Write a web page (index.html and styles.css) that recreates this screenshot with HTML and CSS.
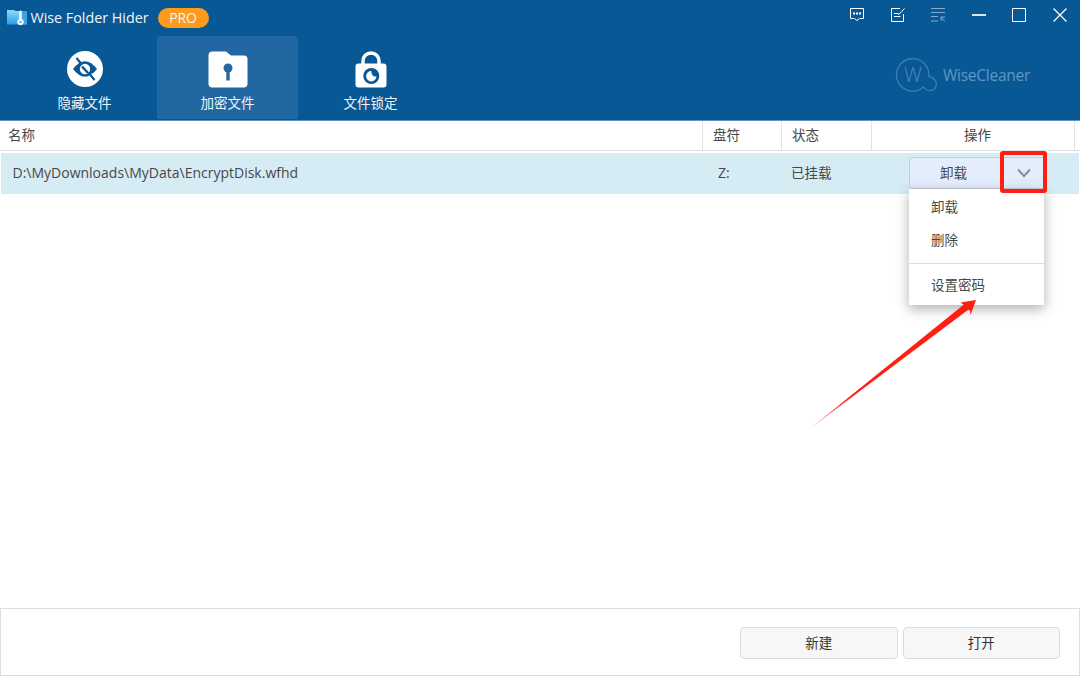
FILE: index.html
```html
<!DOCTYPE html>
<html lang="zh-CN">
<head>
<meta charset="utf-8">
<title>Wise Folder Hider</title>
<link rel="stylesheet" href="styles.css">
</head>
<body>
<div class="window">
  <header class="header">
    <div class="titlebar">
      <svg class="app-icon" width="20" height="18" viewBox="0 0 20 18">
        <defs><linearGradient id="fold" x1="0" y1="0" x2="0" y2="1"><stop offset="0" stop-color="#8bdcff"/><stop offset="1" stop-color="#2b9ee8"/></linearGradient></defs>
        <path d="M0 1h7l1.500 1H20V15.500H0z" fill="url(#fold)"/>
        <path d="M15 2h5v13.500h-5z" fill="#3fa4e6"/>
        <path d="M12.200 2.500q1.300-2 2.600 0V10a3.300 3.300 0 1 1-2.600 0z" fill="#f2f8fa"/>
        <circle cx="13.500" cy="13" r="1.100" fill="#5c9fc4"/>
      </svg>
      <span class="title">Wise Folder Hider</span>
      <span class="badge">PRO</span>
      <div class="controls">
        <svg width="16" height="16" viewBox="0 0 16 16"><path d="M1.500 1.500h13v10h-4L8 13.500 5.500 11.500h-4z"/><path d="M4 6.500h2m1 0h2m1 0h2" stroke-width="2"/></svg>
        <svg width="16" height="16" viewBox="0 0 16 16"><path d="M10 1.500H1.500v13h12V7M4 6.500h4.500M4 9.500h6.500M8.500 8l6-6.500"/></svg>
        <svg class="dim" width="16" height="16" viewBox="0 0 16 16"><path d="M1 1.500h14M1 5.500h14M1 9.500h7m-7 4.500h7m3 0v-4H15m-4 0 3.700 4.500"/></svg>
        <svg width="16" height="16" viewBox="0 0 16 16"><path d="M1 8h14" stroke-width="1.700"/></svg>
        <svg width="16" height="16" viewBox="0 0 16 16"><path d="M1.500 1.500h13v13h-13z"/></svg>
        <svg width="16" height="16" viewBox="0 0 16 16"><path d="m1.500 1.500 13 13m0-13-13 13" stroke-width="1.300"/></svg>
      </div>
    </div>
    <div class="toolbar">
      <div class="tab">
        <svg width="44" height="40" viewBox="0 0 44 40"><circle cx="22" cy="20" r="18" fill="#fff"/><path d="M10 20q12-15.500 24 0-12 15.500-24 0z" fill="#085896"/><circle cx="22" cy="20" r="5.200" fill="#fff"/><path d="m19 17.500 6 6.500" stroke="#085896" stroke-width="2.500"/><path d="M15 8.500 18.500 12.700M28.500 24.600 33 30" stroke="#fff" stroke-width="1.300"/><path d="m13.500 9 5.500 6.800m6.500 7.800 6 7.400" stroke="#085896" stroke-width="2.200"/></svg>
        <span>隐藏文件</span>
      </div>
      <div class="tab active">
        <svg width="44" height="40" viewBox="0 0 44 40"><path d="M6.500 2.500H20l5 4h13q3.500 0 3.500 3.500V34.500q0 4-4 4h-31q-4 0-4-4V6.500q0-4 4-4z" fill="#fff"/><circle cx="22" cy="19" r="4.500" fill="#2168a3"/><path d="M20.300 20h3.400v11.500h-3.400z" fill="#2168a3"/></svg>
        <span>加密文件</span>
      </div>
      <div class="tab">
        <svg width="44" height="40" viewBox="0 0 44 40"><path d="M14 16v-4a8 8 0 0 1 16 0v4" fill="none" stroke="#fff" stroke-width="3.500"/><rect x="6.500" y="14.500" width="31" height="24" rx="3" fill="#fff"/><circle cx="22.300" cy="27" r="8" fill="#085896"/><path d="M22.300 22a5.200 5.200 0 1 0 5.200 5.500q-5 .7-5.200-5.500z" fill="#fff"/></svg>
        <span>文件锁定</span>
      </div>
      <div class="brand">
        <svg width="44" height="36" viewBox="0 0 44 36"><path d="M33.800 19.500a16.200 16.200 0 1 0-5.300 10.500c2 3.200 6 4.500 9.200 2.900 5-2.500 4.700-9.500-.2-11.700-1-1.200-2.400-1.700-3.700-1.700z"/></svg>
        <span class="brand-w">W</span><span class="brand-name">WiseCleaner</span>
      </div>
    </div>
  </header>
  <main class="list">
    <div class="row head"><div>名称</div><div>盘符</div><div>状态</div><div>操作</div></div>
    <div class="row item">
      <div><span class="file">D:\MyDownloads\MyData\EncryptDisk.wfhd</span></div><div>Z:</div><div>已挂载</div>
      <div class="action">
        <div class="split"><span>卸载</span><svg width="14" height="10" viewBox="0 0 14 10"><path d="m1 1.500 6 6.500 6-6.500" fill="none" stroke="#848e9b" stroke-width="1.900"/></svg></div>
        <div class="focus"></div>
        <div class="menu"><div>卸载</div><div>删除</div><hr><div>设置密码</div></div>
        <svg class="arrow" width="170" height="132" viewBox="0 0 170 132"><defs><linearGradient id="tail" x1="0" y1="1" x2="1" y2="0"><stop offset="0" stop-color="#ff1e12" stop-opacity=".35"/><stop offset=".25" stop-color="#ff1e12"/></linearGradient></defs><path d="M0 129 156 8.500 154 5 150.500 2.500 166 0l-5.500 15-.5-4.500L156.500 9z" fill="url(#tail)"/><path d="M0 128.500 154.500 4l4 5.500z" fill="url(#tail)"/></svg>
      </div>
    </div>
  </main>
  <footer class="footer"><button>新建</button><button>打开</button></footer>
</div>
</body>
</html>
```
FILE: styles.css
```css
* { box-sizing: border-box; }
body { margin: 0; font: 13.5px/20px "Open Sans", "Noto Sans CJK SC", sans-serif; color: #484848; }
.window { width: 1080px; height: 676px; display: flex; flex-direction: column; background: #fff; overflow: hidden; }
.header { height: 121px; background: #085896; color: #f0f5f9; border-bottom: 1px solid #5e94bd; }
.titlebar { height: 36px; display: flex; align-items: center; }
.app-icon { margin-left: 7px; }
.title { margin-left: 3.500px; font-size: 14.300px; width: 118px; white-space: nowrap; }
.badge { margin-left: 9px; width: 51px; height: 20px; border-radius: 10px; background: #ff9a1b; text-align: center; font-size: 14px; letter-spacing: -.2px; line-height: 20px; }
.controls { margin-left: auto; display: flex; gap: 24.500px; padding: 0 12.500px 7px 0; fill: none; stroke: #fff; }
.dim { opacity: .5; }
.toolbar { height: 84px; display: flex; padding-left: 14px; }
.tab { width: 141px; height: 83px; margin-right: 2px; padding-top: 13px; display: flex; flex-direction: column; align-items: center; gap: 4px; border-radius: 4px 4px 0 0; }
.active { background: #2168a3; }
.brand { margin-left: auto; display: flex; align-items: center; height: 78px; padding-right: 50px; color: #5f97c2; font-size: 15.500px; }
.brand svg { fill: none; stroke: #3b7fb1; stroke-width: 1.300; }
.brand-w { width: 22px; margin-left: -37px; margin-right: 19px; font-size: 20px; font-weight: 300; color: #4a8aba; text-align: center; }
.brand-name { width: 87px; white-space: nowrap; letter-spacing: -.25px; }
.list { flex: 1; }
.row { display: grid; grid-template-columns: 703px 79px 90px 208px; }
.head { height: 30px; line-height: 29px; border-bottom: 1px solid #e3e3e3; }
.head > div { border-right: 1px solid #e3e3e3; padding-left: 10px; }
.head > div:first-child { padding-left: 8px; }
.head > div:last-child { padding-left: 9px; text-align: center; margin-right: 5px; }
.item { height: 41px; margin: 2px 1px 0; line-height: 40px; background: #d6ecf5; grid-template-columns: 702px 79px 90px 207px; }
.item > div { padding-left: 9px; }
.item > div:nth-child(2) { padding-left: 15px; font-size: 14px; }
.file { display: inline-block; margin-left: 2.500px; font-size: 14px; }
.item > .action { position: relative; padding: 4px 0 0 37px; }
.split { width: 136px; height: 32px; display: flex; align-items: center; justify-content: space-between; padding: 0 13px 0 30px; background: #e4edfc; border: 1px solid #c6ceda; border-radius: 3px; }
.focus { position: absolute; left: 128px; top: -2px; width: 47px; height: 42px; border: 4px solid #ff1e12; border-radius: 3px; z-index: 2; }
.menu { position: absolute; left: 37px; top: 36px; width: 135px; height: 116px; background: #fff; box-shadow: 0 4px 12px rgba(0,0,0,.32); line-height: 33px; padding-top: 2px; }
.menu div { padding-left: 22px; }
.menu hr { margin: 6px 0 5px; border: 0; border-top: 1px solid #ddd; }
.arrow { position: absolute; left: -62px; top: 147px; z-index: 3; }
.footer { height: 68px; border: 1px solid #dedede; display: flex; justify-content: flex-end; gap: 5px; padding: 18px 19px 0 0; }
.footer button { width: 157.500px; height: 32px; padding: 0; background: #f7f7f7; border: 1px solid #dcdcdc; border-radius: 4px; font: inherit; color: #333; }
```
